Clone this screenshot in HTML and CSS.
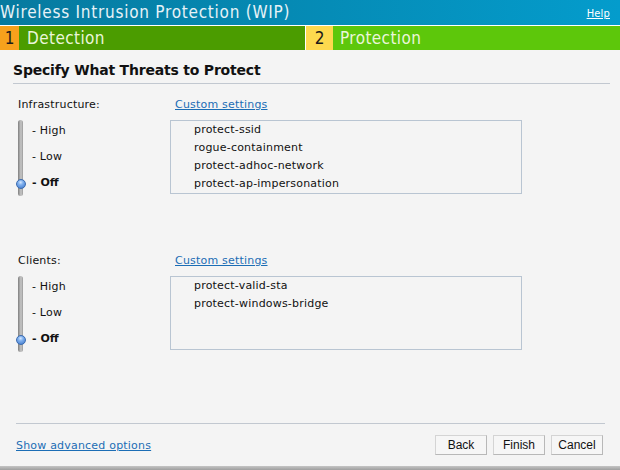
FILE: index.html
```html
<!DOCTYPE html>
<html>
<head>
<meta charset="utf-8">
<link rel="stylesheet" href="styles.css">
</head>
<body>
<div class="page">
  <div class="header">
    <span class="title">Wireless Intrusion Protection (WIP)</span>
    <a class="help" href="#">Help</a>
  </div>
  <div class="steps">
    <div class="step step-done">
      <span class="num">1</span><span class="label">Detection</span>
    </div>
    <div class="step step-active">
      <span class="num">2</span><span class="label">Protection</span>
    </div>
  </div>
  <div class="content">
    <h2 class="heading">Specify What Threats to Protect</h2>

    <div class="section">
      <div class="sec-label">Infrastructure:</div>
      <div class="sec-link"><a href="#">Custom settings</a></div>
      <div class="slider">
        <div class="track"><span class="knob"></span></div>
        <ul class="levels">
          <li>- High</li>
          <li>- Low</li>
          <li class="sel">- Off</li>
        </ul>
      </div>
      <ul class="listbox">
        <li>protect-ssid</li>
        <li>rogue-containment</li>
        <li>protect-adhoc-network</li>
        <li>protect-ap-impersonation</li>
      </ul>
    </div>

    <div class="section section-clients">
      <div class="sec-label">Clients:</div>
      <div class="sec-link"><a href="#">Custom settings</a></div>
      <div class="slider">
        <div class="track"><span class="knob"></span></div>
        <ul class="levels">
          <li>- High</li>
          <li>- Low</li>
          <li class="sel">- Off</li>
        </ul>
      </div>
      <ul class="listbox">
        <li>protect-valid-sta</li>
        <li>protect-windows-bridge</li>
      </ul>
    </div>
  </div>
  <div class="footer">
    <a class="adv" href="#">Show advanced options</a>
    <div class="buttons">
      <button class="btn">Back</button>
      <button class="btn">Finish</button>
      <button class="btn">Cancel</button>
    </div>
  </div>
  <div class="bottom-bar"></div>
</div>
</body>
</html>
```
FILE: styles.css
```css
* { box-sizing: border-box; }
html, body { margin: 0; padding: 0; }
body {
  background: #f4f4f4;
  font-family: "DejaVu Sans", Verdana, sans-serif;
  color: #111;
}
.page {
  width: 620px;
  height: 470px;
  overflow: hidden;
  display: flex;
  flex-direction: column;
}
.header {
  height: 26px;
  flex: none;
  background: linear-gradient(to right, #067a9f, #049ccc);
  border-bottom: 1px solid #ffffff;
  display: flex;
  align-items: center;
  justify-content: space-between;
}
.title {
  color: #e6f2f7;
  font-size: 17px;
  font-stretch: condensed;
  letter-spacing: 0.75px;
  line-height: 25px;
}
.help {
  color: #ffffff;
  font-size: 11px;
  font-stretch: condensed;
  letter-spacing: 0.2px;
  margin-right: 10px;
  margin-top: 1px;
}
.steps {
  height: 24px;
  flex: none;
  display: flex;
}
.step {
  display: flex;
  font-size: 17px;
  font-stretch: condensed;
  letter-spacing: 0.4px;
  line-height: 24px;
}
.step .num {
  color: #1a1a1a;
  text-align: center;
  letter-spacing: 0;
}
.step .label {
  color: #eaf6da;
  padding-left: 8px;
  flex: 1;
}
.step-done { width: 306px; border-right: 1px solid #ffffff; }
.step-done .num { width: 19px; background: #f7a11c; }
.step-done .label { background: #4b9c00; }
.step-active { flex: 1; }
.step-active .num { width: 27px; background: #fdd94e; }
.step-active .label { background: #5dc70b; padding-left: 7px; }

.content {
  flex: 1;
  padding: 12px 10px 0 13px;
}
.heading {
  margin: 0;
  font-size: 14px;
  line-height: 17px;
  font-weight: bold;
  letter-spacing: -0.2px;
  padding-bottom: 4px;
  border-bottom: 1px solid #c2c8d0;
  color: #111;
}
.section {
  display: grid;
  grid-template-columns: 152px 352px;
  grid-template-rows: 22px 74px;
  padding-left: 5px;
  margin-top: 14px;
  font-size: 11px;
  letter-spacing: 0.2px;
}
.section-clients { margin-top: 60px; }
.sec-label { line-height: 14px; }
.sec-link { line-height: 14px; padding-left: 5px; }
.sec-link a, .adv { color: #1b6db5; }
.slider {
  display: flex;
  height: 76px;
}
.track {
  width: 5px;
  height: 76px;
  border-radius: 3px;
  background: linear-gradient(to right, #7e7e7e, #c8c8c8 60%, #9a9a9a);
  position: relative;
}
.knob {
  position: absolute;
  left: -2px;
  top: 59px;
  width: 10px;
  height: 10px;
  border-radius: 50%;
  background: radial-gradient(circle at 45% 30%, #d6e8ff 0, #7fb0ee 35%, #3c74c8 100%);
  border: 1px solid #3a6bb0;
}
.levels {
  list-style: none;
  margin: 0;
  padding: 4px 0 0 9px;
}
.levels li {
  line-height: 14px;
  height: 26px;
}
.levels .sel { font-weight: bold; letter-spacing: 0; }
.listbox {
  list-style: none;
  margin: 0;
  padding: 0 0 0 23px;
  border: 1px solid #b9c5d2;
  height: 74px;
}
.listbox li { line-height: 18px; }

.footer {
  flex: none;
  margin: 0 15px 0 16px;
  border-top: 1px solid #c2c8d0;
  padding: 11px 2px 11px 0;
  display: flex;
  align-items: center;
  justify-content: space-between;
  font-size: 11px;
  letter-spacing: 0.2px;
}
.adv { margin-top: 1px; }
.buttons { display: flex; gap: 6px; }
.btn {
  font-family: "Liberation Sans", Arial, sans-serif;
  font-size: 12px;
  letter-spacing: 0;
  width: 52px;
  height: 20px;
  padding: 0;
  background: #f6f6f6;
  color: #111;
  border: 1px solid #d4d4d4;
  border-right-color: #b8b8b8;
  border-bottom-color: #b8b8b8;
}
.bottom-bar {
  flex: none;
  height: 4px;
  background: linear-gradient(#c4c4c4, #9e9e9e);
}
```
